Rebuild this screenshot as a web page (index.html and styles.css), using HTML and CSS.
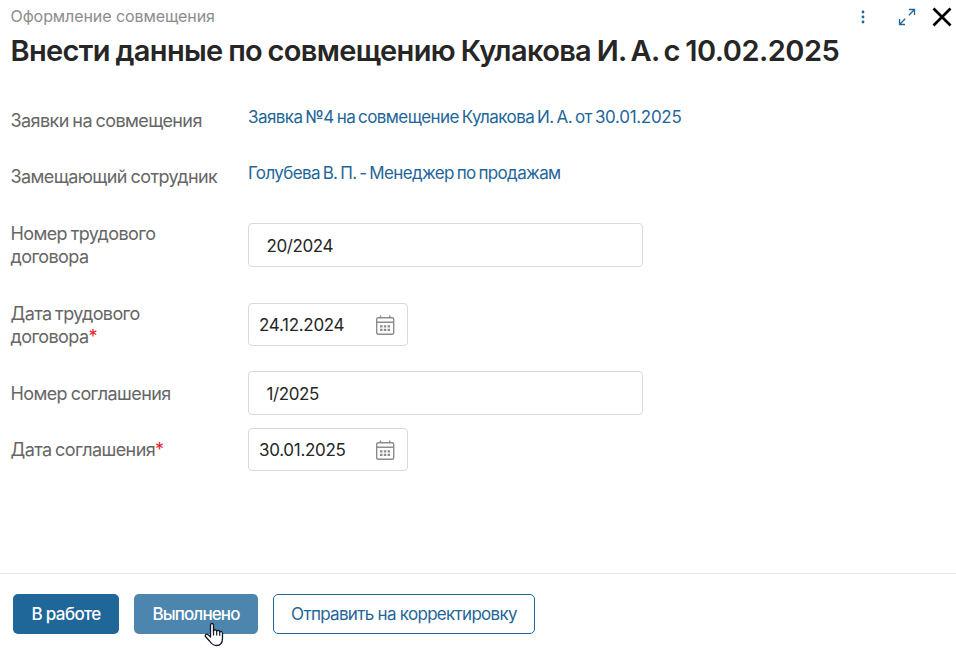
FILE: index.html
```html
<!DOCTYPE html>
<html lang="ru">
<head>
<meta charset="utf-8">
<title>Оформление совмещения</title>
<link rel="stylesheet" href="styles.css">
</head>
<body>
<svg class="sprite" aria-hidden="true">
  <symbol id="calendar" viewBox="0 0 20 22">
    <g fill="none" stroke="#8c8c8c" stroke-width="1.4">
      <rect x="1.7" y="3.7" width="17" height="16.6" rx="1.5"/>
      <path d="M1.7 8.3h17M5.5 1.500v2.500M14.800 1.500v2.500"/>
    </g>
    <path d="M5 12.300H15.200M5 15.800H15.200" fill="none" stroke="#8c8c8c" stroke-width="2.2" stroke-dasharray="2.500 1.300"/>
  </symbol>
</svg>
<div class="page">
  <header class="header">
    <div class="titles">
      <div class="process">Оформление совмещения</div>
      <h1 class="title">Внести данные по совмещению Кулакова <span class="initials">И. А. с</span> <span class="title-date">10.02.2025</span></h1>
    </div>
    <div class="tools">
      <svg class="dots" width="4" height="14" viewBox="0 0 4 14" fill="#1f6699"><circle cx="2" cy="2" r="1.4"/><circle cx="2" cy="7" r="1.4"/><circle cx="2" cy="12" r="1.4"/></svg>
      <svg class="expand" width="18" height="18" viewBox="0 0 18 18" fill="none" stroke="#1f6699" stroke-width="1.3"><path d="M11 1.500h5.500V7M16.500 1.500l-5.700 5.700M1.500 11v5.500H7M1.500 16.500l5.700-5.700"/></svg>
      <svg class="close" width="20" height="20" viewBox="0 0 20 20" fill="none" stroke="#000" stroke-width="2.7"><path d="M1.500 1.500l17 17M18.500 1.500l-17 17"/></svg>
    </div>
  </header>
  <main class="form">
    <div class="row row-request">
      <div class="label">Заявки на совмещения</div>
      <a class="link">Заявка №4 на совмещение Кулакова И. А. от <span class="link-date">30.01.2025</span></a>
    </div>
    <div class="row row-person">
      <div class="label">Замещающий сотрудник</div>
      <a class="link">Голубева В. П. - Менеджер по продажам</a>
    </div>
    <div class="row row-contract">
      <div class="label">Номер трудового<br>договора</div>
      <div class="field">20/2024</div>
    </div>
    <div class="row row-contract">
      <div class="label">Дата трудового<br>договора<span class="req">*</span></div>
      <div class="field date"><span>24.12.2024</span><svg width="20" height="22"><use href="#calendar"/></svg></div>
    </div>
    <div class="row row-agreement">
      <div class="label">Номер соглашения</div>
      <div class="field">1/2025</div>
    </div>
    <div class="row row-agreement-date">
      <div class="label">Дата соглашения<span class="req">*</span></div>
      <div class="field date"><span>30.01.2025</span><svg width="20" height="22"><use href="#calendar"/></svg></div>
    </div>
  </main>
  <footer class="footer">
    <div class="btn primary">В работе</div>
    <div class="btn hover">Выполнено
      <svg class="cursor" width="20" height="25" viewBox="0 0 20 25"><path d="M6.500 15V3.500C6.500.6 9.500.6 9.500 3.500V9C10.500 6.900 12.600 7.700 12.700 9.500C13.700 7.600 15.600 8.400 15.700 10.300C16.700 8.700 18.500 9.400 18.500 11.500V16C18.500 21 16.500 23.500 12.500 23.500C9 23.500 7.500 22 5.500 19L1.700 14.800C.4 12.900 2.600 11.300 4.200 12.800Z" fill="#fff" stroke="#111827" stroke-width="1.300" stroke-linejoin="round"/><path d="M9.500 8.500v5M12.700 9.500v4M15.700 10.300v3.500" fill="none" stroke="#111827" stroke-width="1.200"/></svg>
    </div>
    <div class="btn outline">Отправить на корректировку</div>
  </footer>
</div>
</body>
</html>
```
FILE: styles.css
```css
* { box-sizing: border-box; }
body { margin: 0; background: #fff; color: #262626; font-family: Inter, "Liberation Sans", sans-serif; font-size: 17px; letter-spacing: -0.4px; }
.sprite { position: absolute; width: 0; height: 0; }
.page { height: 651px; display: flex; flex-direction: column; overflow: hidden; }
.header { height: 92px; display: flex; justify-content: space-between; padding-left: 10.5px; }
.titles { flex: none; }
.process { margin-top: 5px; height: 23px; line-height: 22px; font-size: 16px; letter-spacing: -0.08px; color: #8c8c8c; }
.title { margin: 5px 0 0; line-height: 36px; font-size: 29px; font-weight: 600; letter-spacing: -0.65px; word-spacing: -1.1px; white-space: nowrap; }
.initials { word-spacing: -2.2px; }
.title-date { letter-spacing: -0.5px; }
.tools { display: flex; align-items: flex-start; padding: 7px 4px 0 0; }
.dots { margin: 3px 33px 0 0; }
.expand { margin: 1px 16px 0 0; }
.form { flex: 1; }
.row { display: grid; grid-template-columns: 237.5px 1fr; padding-left: 10.5px; align-items: start; }
.label { color: #666; font-size: 18px; line-height: 23px; letter-spacing: -0.6px; word-spacing: -0.8px; padding-top: 17px; white-space: nowrap; }
.link { color: #1f6699; line-height: 22px; padding-top: 14px; letter-spacing: -0.57px; word-spacing: -1.3px; white-space: nowrap; }
.row-person .link { letter-spacing: -0.64px; }
.link-date { letter-spacing: -0.3px; }
.row-request, .row-person { height: 56px; }
.row-contract { height: 80px; padding-top: 1px; }
.row-agreement { height: 57px; }
.field { width: 395px; height: 44px; margin-top: 18px; padding: 1px 18px 0 17.5px; border: 1px solid #d9d9d9; border-radius: 4px; display: flex; align-items: center; }
.date { width: 160px; height: 43px; padding: 0 12px 0 10px; justify-content: space-between; letter-spacing: -0.3px; }
.row-agreement .label { padding-top: 18px; }
.row-agreement .field, .row-agreement-date .field { margin-top: 7px; }
.req { color: #e5252a; }
.footer { height: 78px; border-top: 1px solid #e6e6e6; padding: 20px 13px; display: flex; gap: 15px; }
.btn { position: relative; height: 40px; border-radius: 5px; display: flex; align-items: center; justify-content: center; color: #fff; white-space: nowrap; font-weight: 500; letter-spacing: -0.7px; }
.primary { width: 106px; background: #1f6699; letter-spacing: -0.65px; }
.hover { width: 124px; background: #4c85ad; letter-spacing: -0.9px; }
.outline { width: 262px; border: 1px solid #1f6699; color: #1f6699; font-weight: 400; }
.cursor { position: absolute; left: 70px; top: 28px; }
```
